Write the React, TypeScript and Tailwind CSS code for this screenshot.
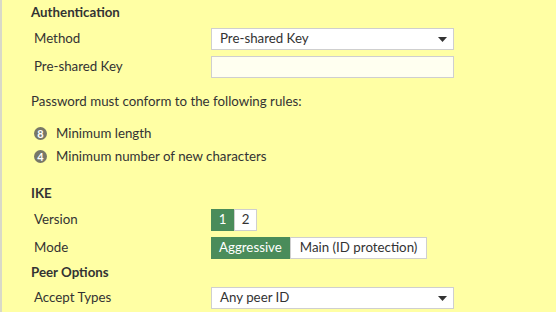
import React from 'react';

const Caret: React.FC = () => (
    <svg width="9" height="5" viewBox="0 0 9 5" className="text-[#333]">
        <path d="M0 0 H9 L4.5 5 Z" fill="currentColor" />
    </svg>
);

const Row: React.FC<{ label: string; className?: string; children: React.ReactNode }> = ({ label, className = '', children }) => (
    <div className={`flex items-center h-[22px] ${className}`}>
        <div className="w-[180px] pl-[3px]">{label}</div>
        {children}
    </div>
);

const Select: React.FC<{ value: string }> = ({ value }) => (
    <div className="flex items-center justify-between w-[243px] h-[22px] bg-white border border-[#cfcfcf] pl-[8px] pr-[6px]">
        <span>{value}</span>
        <Caret />
    </div>
);

const Badge: React.FC<{ n: number; text: string }> = ({ n, text }) => (
    <div className="flex items-center h-[23px] pl-[3px]">
        <span className="flex items-center justify-center w-[13px] h-[13px] rounded-full bg-[#777768] text-white text-[11px] font-bold leading-none mr-[9px]">{n}</span>
        {text}
    </div>
);

const App: React.FC = () => {
    return (
        <div className="w-[556px] h-[312px] overflow-hidden bg-[#ffffa4] border-l-2 border-[#d9d9c8] pl-[29px] pt-[4px] text-[13.3px] text-[#333] font-['Lato','Liberation_Sans',sans-serif]">
            <div className="h-[16px] leading-[16px] font-bold">Authentication</div>
            <Row label="Method" className="mt-[8px]"><Select value="Pre-shared Key" /></Row>
            <Row label="Pre-shared Key" className="mt-[6px]">
                <div className="w-[243px] h-[22px] bg-[#fffff0] border border-[#cfcfcf]" />
            </Row>
            <div className="mt-[15px] h-[16px] leading-[16px]">Password must conform to the following rules:</div>
            <div className="mt-[13px]">
                <Badge n={8} text="Minimum length" />
                <Badge n={4} text="Minimum number of new characters" />
            </div>
            <div className="mt-[17px] h-[16px] leading-[16px] font-bold">IKE</div>
            <Row label="Version" className="mt-[8px]">
                <div className="flex h-[22px]">
                    <span className="flex items-center justify-center w-[23px] bg-[#4a8c5a] text-white">1</span>
                    <span className="flex items-center justify-center w-[23px] bg-white border border-[#cfcfcf]">2</span>
                </div>
            </Row>
            <Row label="Mode" className="mt-[6px]">
                <div className="flex h-[22px]">
                    <span className="flex items-center px-[8px] bg-[#4a8c5a] text-white">Aggressive</span>
                    <span className="flex items-center px-[9px] bg-white border border-[#cfcfcf]">Main (ID protection)</span>
                </div>
            </Row>
            <div className="mt-[5px] h-[16px] leading-[16px] font-bold">Peer Options</div>
            <Row label="Accept Types" className="mt-[7px]"><Select value="Any peer ID" /></Row>
        </div>
    );
};

export default App;
